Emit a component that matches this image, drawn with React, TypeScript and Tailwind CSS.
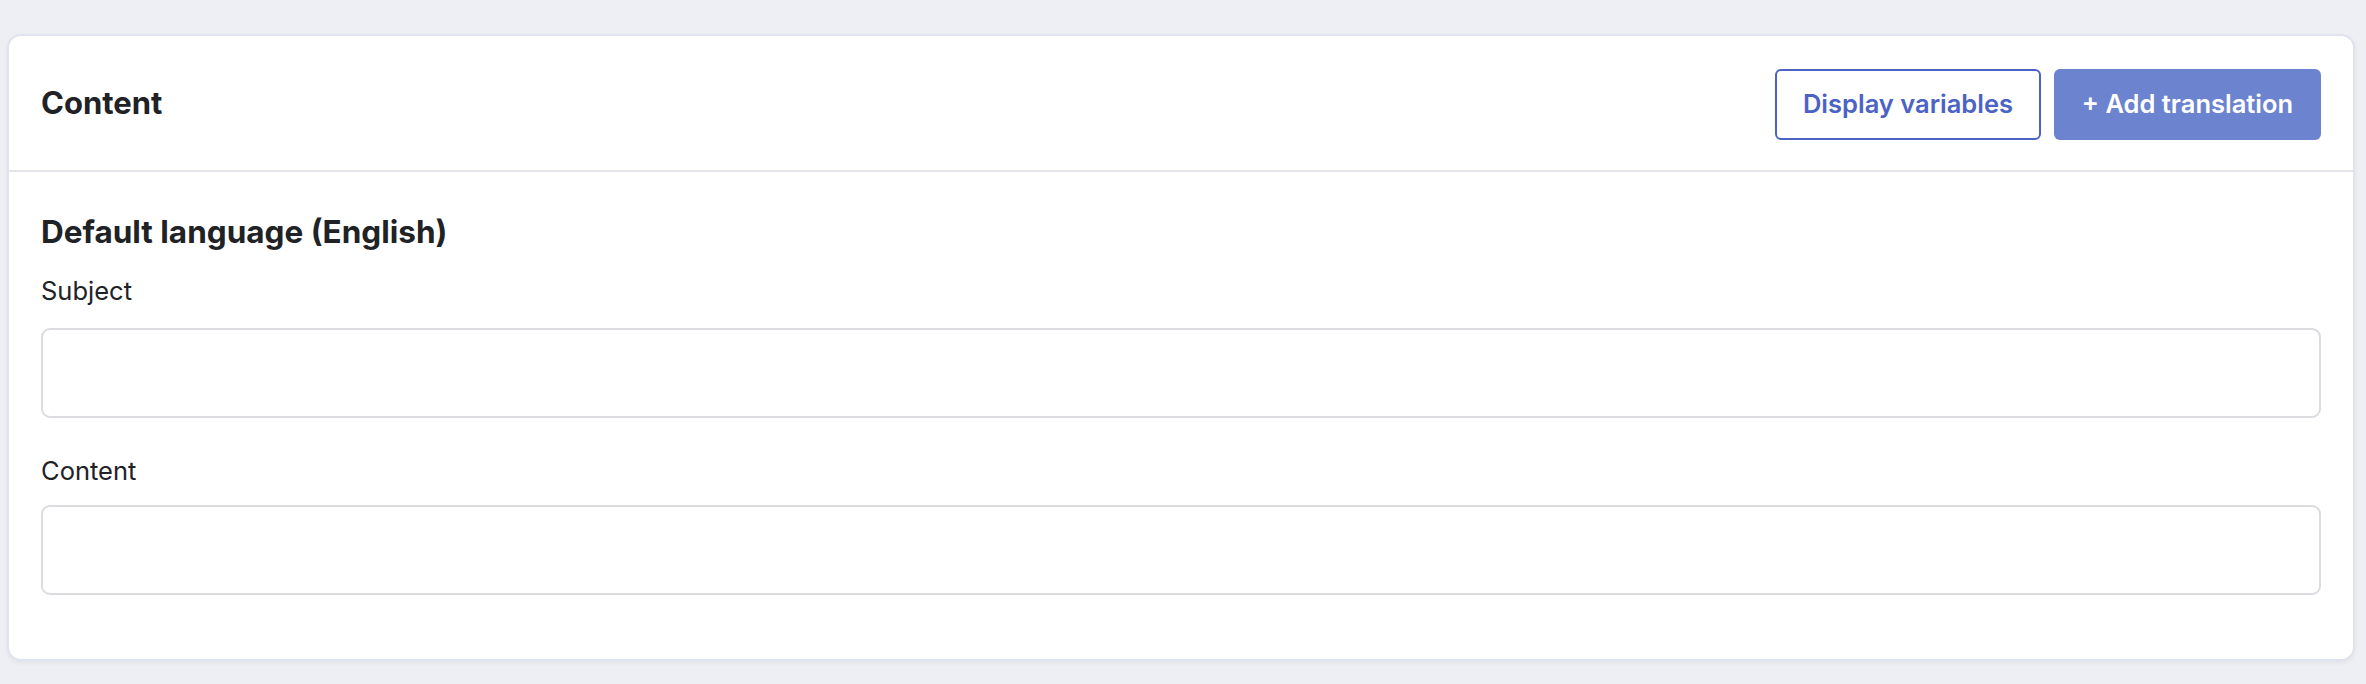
import React from "react";

export default function App() {
  return (
    <div className="min-h-[684px] w-full bg-[#eeeff4] pt-[34px] pl-[7px] pr-[11px] pb-[22px] font-['Inter','Liberation_Sans',sans-serif] text-[#202226]">
      <div className="rounded-[14px] border-2 border-[#dfe3ef] bg-white shadow-[0_2px_4px_rgba(40,50,90,0.06)]">
        <div className="flex h-[136px] items-center justify-between border-b-2 border-[#e3e5eb] px-[32px]">
          <h2 className="text-[31px] leading-[38px] font-bold">Content</h2>
          <div className="flex items-center gap-[13px] pt-[2px]">
            <button className="h-[71px] w-[266px] rounded-[6px] border-2 border-[#4b63c4] bg-white text-[25.5px] font-semibold text-[#4b63c4]">
              Display variables
            </button>
            <button className="h-[71px] w-[267px] rounded-[6px] bg-[#6c83d0] text-[25.5px] font-semibold text-white">
              + Add translation
            </button>
          </div>
        </div>
        <div className="px-[32px] pt-[41px] pb-[64px]">
          <h3 className="text-[31.5px] leading-[38px] font-bold">Default language (English)</h3>
          <label className="mt-[24px] block text-[25.5px] leading-[31px]">Subject</label>
          <div className="mt-[22px] h-[90px] w-full rounded-[9px] border-2 border-[#dbdbe0] bg-white" />
          <label className="mt-[37px] block text-[25.5px] leading-[31px]">Content</label>
          <div className="mt-[19px] h-[90px] w-full rounded-[9px] border-2 border-[#dbdbe0] bg-white" />
        </div>
      </div>
    </div>
  );
}
